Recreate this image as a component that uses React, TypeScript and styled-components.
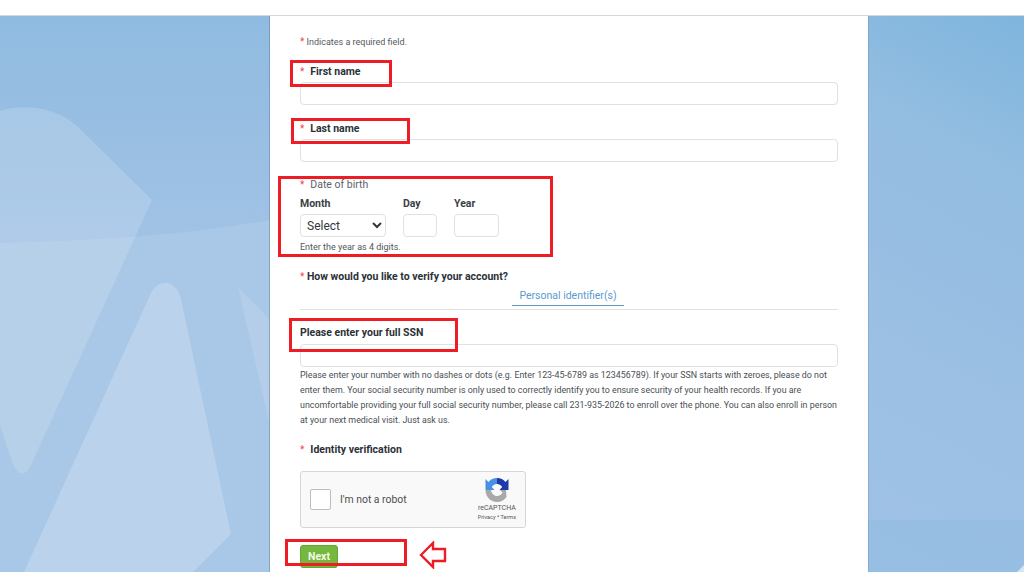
import React from 'react'
import styled, { createGlobalStyle } from 'styled-components'

const GlobalStyle = createGlobalStyle`
  html, body {
    margin: 0;
    padding: 0;
    height: 100%;
    overflow: hidden;
    background: #ffffff;
    font-family: Roboto, "Liberation Sans", sans-serif;
  }
  * { box-sizing: border-box; }
`

const Required = () => <Star>*</Star>

const Backdrop = () => (
  <BackdropSvg viewBox="0 0 1024 556" preserveAspectRatio="none">
    <defs>
      <linearGradient id="sky" x1="0" y1="1" x2="1" y2="0">
        <stop offset="0" stopColor="#a4c5e7" />
        <stop offset="0.6" stopColor="#9cc0e4" />
        <stop offset="0.85" stopColor="#93bde1" />
        <stop offset="1" stopColor="#7fb5dd" />
      </linearGradient>
      <linearGradient id="left" x1="0" y1="0" x2="0" y2="1">
        <stop offset="0" stopColor="#90bbe0" />
        <stop offset="0.4" stopColor="#a0c2e5" />
      </linearGradient>
    </defs>
    <rect x="0" y="0" width="1024" height="556" fill="url(#sky)" />
    <rect x="0" y="0" width="270" height="556" fill="url(#left)" />
    <path d="M0 227 C100 225 190 218 270 204 L270 556 L0 556 Z" fill="#a9c7e6" />
    <path d="M868 504 L1024 504 L1024 556 L868 556 Z" fill="#93bde1" opacity="0.6" />
    <path d="M0 95 C22 88 55 90 78 111 L152 184 L31 449 Q21 468 12 446 L0 409 Z" fill="#ffffff" opacity="0.16" />
    <path d="M24 556 L150 279 C157 262 176 262 181 283 L231 518 L193 556 Z" fill="#ffffff" opacity="0.2" />
    <path d="M238 271 L269 303 L269 406 Z" fill="#ffffff" opacity="0.13" />
    <path d="M1017 556 L1024 549 L1024 556 Z" fill="#ffffff" opacity="0.6" />
  </BackdropSvg>
)

const RecaptchaLogo = () => (
  <svg width="24" height="24" viewBox="0 0 24 24">
    <path d="M0.5 12 L6 12 C6.5 15.5 9 18 12 18 C14.5 18 16.5 16.5 17.5 14.5 L15 12 L21 12 L21.5 19 C19.5 22 16 24 12 24 C5.5 24 0.5 18.5 0.5 12 Z" fill="#a9a9a9" />
    <path d="M12 0 C8.5 0 5.5 1.5 3.5 4 L0.5 1 L0.5 12 L9.5 12 L6.8 9 C8 7 10 6 12 6 Z" fill="#4a90e2" />
    <path d="M12 0 C15.5 0 18.5 1.5 20.5 4 L23.5 1 L23.5 12 L14.5 12 L17.2 9 C16 7 14 6 12 6 Z" fill="#1c3aa9" />
  </svg>
)

export default function App() {
  return (
    <>
      <GlobalStyle />
      <TopBar />
      <Stage>
        <Backdrop />
        <Panel>
          <Note><Required /> Indicates a required field.</Note>

          <FieldLabel><Required /><LabelGap />First name</FieldLabel>
          <TextInput />

          <FieldLabel><Required /><LabelGap />Last name</FieldLabel>
          <TextInput />

          <DateLegend><Required /><LabelGap />Date of birth</DateLegend>
          <DateRow>
            <DateCol $width={86}>
              <DateHead>Month</DateHead>
              <MonthSelect defaultValue="">
                <option value="">Select</option>
              </MonthSelect>
            </DateCol>
            <DateCol $width={34}>
              <DateHead>Day</DateHead>
              <SmallInput />
            </DateCol>
            <DateCol $width={45}>
              <DateHead>Year</DateHead>
              <SmallInput />
            </DateCol>
          </DateRow>
          <DateHelp>Enter the year as 4 digits.</DateHelp>

          <Question><Required /> How would you like to verify your account?</Question>
          <Tabs>
            <ActiveTab>Personal identifier(s)</ActiveTab>
          </Tabs>

          <SsnLabel>Please enter your full SSN</SsnLabel>
          <TextInput />
          <Help>
            Please enter your number with no dashes or dots (e.g. Enter 123-45-6789 as 123456789). If your SSN starts with zeroes, please do not enter them. Your social security number is only used to correctly identify you to ensure security of your health records. If you are uncomfortable providing your full social security number, please call 231-935-2026 to enroll over the phone. You can also enroll in person at your next medical visit. Just ask us.
          </Help>

          <VerifyLabel><Required /><LabelGap />Identity verification</VerifyLabel>
          <Captcha>
            <CaptchaBox />
            <CaptchaText>I'm not a robot</CaptchaText>
            <CaptchaBrand>
              <RecaptchaLogo />
              <BrandName>reCAPTCHA</BrandName>
              <BrandLinks>Privacy * Terms</BrandLinks>
            </CaptchaBrand>
          </Captcha>
          <NextButton>Next</NextButton>
        </Panel>

        <Callout $x={290} $y={44} $w={102} $h={27} />
        <Callout $x={291} $y={102} $w={119} $h={26} />
        <Callout $x={278} $y={160} $w={275} $h={81} />
        <Callout $x={289} $y={302} $w={169} $h={34} />
        <Callout $x={285} $y={523} $w={122} $h={27} />
        <ArrowMark width="28" height="28" viewBox="0 0 28 28">
          <path d="M2 14 L14 2 L14 8 L26 8 L26 20 L14 20 L14 26 Z" fill="#fff" stroke="#ee1c25" strokeWidth="2.4" />
        </ArrowMark>
      </Stage>
    </>
  )
}

const TopBar = styled.div`
  height: 16px;
  background: #ffffff;
  border-bottom: 1px solid #d4d6d9;
`

const Stage = styled.div`
  position: relative;
  height: 556px;
  overflow: hidden;
  display: flex;
  padding-left: 270px;
`

const BackdropSvg = styled.svg`
  position: absolute;
  left: 0;
  top: 0;
  width: 1024px;
  height: 556px;
`

const Panel = styled.main`
  position: relative;
  width: 598px;
  height: 640px;
  padding: 20px 30px 0;
  background: #ffffff;
  box-shadow: -1px 0 0 rgba(90, 120, 150, 0.45), 1px 0 0 rgba(90, 120, 150, 0.25);
  color: #2b2f33;
`

const Star = styled.span`
  color: #e9474f;
  font-size: 10px;
  font-weight: 400;
`

const LabelGap = styled.span`
  display: inline-block;
  width: 6px;
`

const Note = styled.div`
  height: 12px;
  font-size: 9px;
  line-height: 12px;
  color: #555a60;
`

const FieldLabel = styled.label`
  display: block;
  height: 13px;
  margin-top: 17px;
  margin-bottom: 4px;
  font-size: 10.5px;
  line-height: 13px;
  font-weight: 700;
  color: #2b3138;
`

const TextInput = styled.input`
  display: block;
  width: 100%;
  height: 23px;
  background: #fff;
  border: 1px solid #dfe1e3;
  border-radius: 4px;
  outline: none;
`

const DateLegend = styled.div`
  height: 13px;
  margin-top: 16px;
  font-size: 10.5px;
  line-height: 13px;
  color: #5c6166;
`

const DateRow = styled.div`
  display: flex;
  gap: 17px;
  margin-top: 6px;
`

const DateCol = styled.div<{ $width: number }>`
  width: ${p => p.$width}px;
`

const DateHead = styled.div`
  height: 13px;
  margin-bottom: 4px;
  font-size: 10.5px;
  line-height: 13px;
  font-weight: 700;
  color: #3a3f45;
`

const MonthSelect = styled.select`
  display: block;
  width: 86px;
  height: 23px;
  padding: 0 2px;
  font-family: Roboto, "Liberation Sans", sans-serif;
  font-size: 12px;
  color: #33373b;
  background: #fff;
  border: 1px solid #dfe1e3;
  border-radius: 4px;
  outline: none;
`

const SmallInput = styled.input`
  display: block;
  width: 100%;
  height: 23px;
  background: #fff;
  border: 1px solid #dfe1e3;
  border-radius: 4px;
  outline: none;
`

const DateHelp = styled.div`
  height: 12px;
  margin-top: 4px;
  font-size: 9px;
  line-height: 12px;
  color: #51565b;
`

const Question = styled.div`
  height: 13px;
  margin-top: 17px;
  font-size: 10.5px;
  line-height: 13px;
  font-weight: 700;
  color: #2b3138;
`

const Tabs = styled.div`
  display: flex;
  justify-content: center;
  height: 22px;
  margin-top: 5px;
  padding-right: 2px;
  border-bottom: 1px solid #dfe1e3;
`

const ActiveTab = styled.div`
  width: 112px;
  height: 18px;
  text-align: center;
  font-size: 10.5px;
  line-height: 15px;
  color: #5a9bd0;
  border-bottom: 1.5px solid #5a9bd0;
`

const SsnLabel = styled.div`
  height: 13px;
  margin-top: 16px;
  margin-bottom: 5px;
  font-size: 10.5px;
  line-height: 13px;
  font-weight: 700;
  color: #2b3138;
`

const Help = styled.p`
  margin: 1px 0 0;
  font-size: 8.9px;
  line-height: 15px;
  color: #4a4f54;
`

const VerifyLabel = styled.div`
  height: 13px;
  margin-top: 15px;
  font-size: 10.5px;
  line-height: 13px;
  font-weight: 700;
  color: #2b3138;
`

const Captcha = styled.div`
  display: flex;
  align-items: center;
  width: 226px;
  height: 57px;
  margin-top: 15px;
  padding: 0 9px 0 9px;
  background: #f9f9f9;
  border: 1px solid #d6d6d6;
  border-radius: 3px;
`

const CaptchaBox = styled.div`
  width: 21px;
  height: 21px;
  background: #fff;
  border: 1px solid #bdbdbd;
  border-radius: 2px;
`

const CaptchaText = styled.span`
  margin-left: 9px;
  font-size: 10.4px;
  color: #4d4d4d;
`

const CaptchaBrand = styled.div`
  display: flex;
  flex-direction: column;
  align-items: center;
  margin-left: auto;
`

const BrandName = styled.span`
  font-size: 7px;
  line-height: 9px;
  margin-top: 2px;
  color: #555;
`

const BrandLinks = styled.span`
  font-size: 5.5px;
  line-height: 8px;
  color: #555;
`

const NextButton = styled.button`
  display: block;
  width: 38px;
  height: 23px;
  margin-top: 17px;
  padding: 0;
  font-family: Roboto, "Liberation Sans", sans-serif;
  font-size: 10.5px;
  font-weight: 700;
  color: #f2f8e8;
  background: #74b83e;
  border: 1px solid #66a733;
  border-radius: 3px;
`

const Callout = styled.div<{ $x: number; $y: number; $w: number; $h: number }>`
  position: absolute;
  left: ${p => p.$x}px;
  top: ${p => p.$y}px;
  width: ${p => p.$w}px;
  height: ${p => p.$h}px;
  border: 3px solid #ee1c25;
  pointer-events: none;
`

const ArrowMark = styled.svg`
  position: absolute;
  left: 419px;
  top: 525px;
`
